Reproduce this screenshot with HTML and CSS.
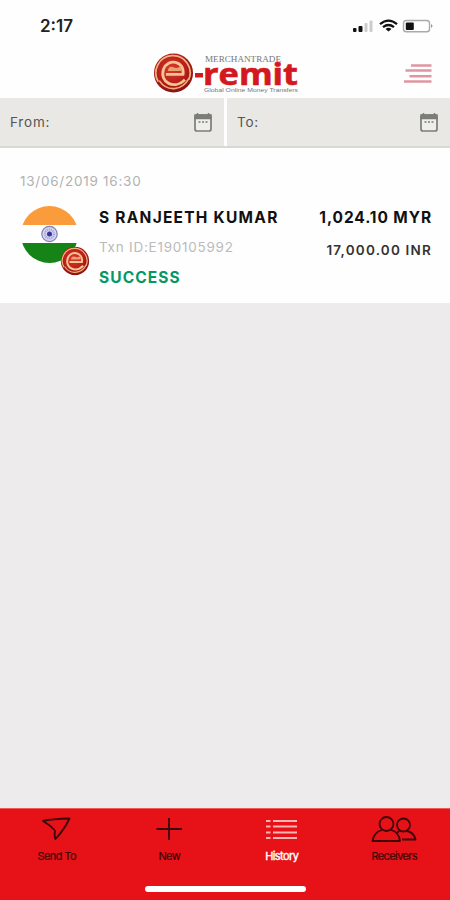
FILE: index.html
```html
<!DOCTYPE html>
<html lang="en">
<head>
    <meta charset="UTF-8">
    <meta name="viewport" content="width=device-width, initial-scale=1.0">
    <title>e-remit History</title>
    <link rel="stylesheet" href="styles.css">
</head>
<body>

    <div class="app">
        <div class="status-bar">
            <span class="time">2:17</span>
            <svg class="status-icons" width="82" height="16" viewBox="0 0 82 16">
                <rect x="1" y="10" width="3.5" height="4" rx="1" fill="#111"/>
                <rect x="6.5" y="8" width="4" height="6" rx="1" fill="#111"/>
                <rect x="12.5" y="5" width="3" height="9" rx="1" fill="#ccc"/>
                <rect x="17.5" y="2.5" width="3" height="11.5" rx="1" fill="#ccc"/>
                <g fill="none" stroke="#111" stroke-width="2.3">
                    <path d="M28 6.2Q36.5-1 45 6.2"/>
                    <path d="M31 9.1Q36.5 4.8 42 9.1"/>
                </g>
                <path d="M33.5 10.9Q36.5 8.8 39.5 10.9L36.5 13.5Z" fill="#111"/>
                <rect x="51.5" y="2.5" width="26" height="11.3" rx="2.8" fill="#fff" stroke="#aaa" stroke-width="1.4"/>
                <rect x="53.8" y="4.5" width="8" height="7.5" rx="1" fill="#111"/>
                <path d="M79 6Q82 8 79 10Z" fill="#999"/>
            </svg>
        </div>

        <div class="header">
            <svg class="logo" width="148" height="44" viewBox="0 0 148 44">
                <defs>
                    <radialGradient id="coin-red" cx="45%" cy="40%" r="60%">
                        <stop offset="0" stop-color="#d93c2e"/>
                        <stop offset="0.6" stop-color="#b81e1c"/>
                        <stop offset="1" stop-color="#8a1214"/>
                    </radialGradient>
                    <symbol id="coin" viewBox="0 0 42 42">
                        <circle cx="21" cy="21" r="20.5" fill="url(#coin-red)"/>
                        <path d="M5 30A18 18 0 1 1 37 28" fill="none" stroke="#efb27b" stroke-width="1.8"/>
                        <path d="M13 22.5H31C33 8 15 5 10.500 17C6 31 22 39 33 28" fill="none" stroke="#f5c491" stroke-width="3"/>
                        <path d="M15 19Q16 13 21 15Q25 17 29 13L29 19Z" fill="#e9a16f"/>
                        <path d="M6 29C14 41 30 40 37 27" fill="none" stroke="#efae75" stroke-width="1.8"/>
                    </symbol>
                </defs>
                <use href="#coin" x="1" y="2" width="41" height="40"/>
                <text class="logo-top" x="53" y="10.5" textLength="76" lengthAdjust="spacingAndGlyphs">MERCHANTRADE</text>
                <rect x="43" y="22" width="8" height="4.5" fill="#d41820"/>
                <text class="logo-name" x="51" y="33.5" textLength="95" lengthAdjust="spacingAndGlyphs">remit</text>
                <text class="logo-tag" x="52" y="41" textLength="94" lengthAdjust="spacingAndGlyphs">Global Online Money Transfers</text>
            </svg>
            <svg class="menu" width="30" height="22" viewBox="0 0 30 22" stroke="#df96a3" stroke-width="2.4">
                <path d="M8 2.5H28.500M2.500 7.500H28.500M6.500 13.300H28.500M1 18.500H28.500"/>
            </svg>
        </div>

        <div class="filters">
            <div class="filter">
                <span>From:</span>
                <svg width="20" height="22" viewBox="0 0 20 22">
                    <rect x="2" y="4" width="16" height="16" rx="2" fill="#eeeeeb" stroke="#7c7c78" stroke-width="1.7"/>
                    <path d="M2 4H18V7.500H2ZM4.500 2V5M15.500 2V5" fill="#7c7c78" stroke="#7c7c78" stroke-width="1.5"/>
                    <path d="M5.500 11H14.500" stroke="#7c7c78" stroke-width="1.6" stroke-dasharray="2 1.5"/>
                </svg>
            </div>
            <div class="filter">
                <span>To:</span>
                <svg width="20" height="22" viewBox="0 0 20 22">
                    <rect x="2" y="4" width="16" height="16" rx="2" fill="#eeeeeb" stroke="#7c7c78" stroke-width="1.7"/>
                    <path d="M2 4H18V7.500H2ZM4.500 2V5M15.500 2V5" fill="#7c7c78" stroke="#7c7c78" stroke-width="1.5"/>
                    <path d="M5.500 11H14.500" stroke="#7c7c78" stroke-width="1.6" stroke-dasharray="2 1.5"/>
                </svg>
            </div>
        </div>

        <div class="transaction">
            <div class="date">13/06/2019 16:30</div>
            <div class="details">
                <svg class="flag" width="70" height="70" viewBox="0 0 70 70">
                    <clipPath id="flag-clip"><circle cx="29.5" cy="28.5" r="28.5"/></clipPath>
                    <g clip-path="url(#flag-clip)">
                        <path d="M0 0H60V19H0Z" fill="#fb9c3c"/>
                        <path d="M0 19H60V37H0Z" fill="#fff"/>
                        <path d="M0 37H60V58H0Z" fill="#158316"/>
                    </g>
                    <circle cx="29.5" cy="28" r="7.7" fill="#d5d5f0" stroke="#8080bd" stroke-width="1.2"/>
                    <circle cx="29.5" cy="28" r="4.5" fill="none" stroke="#9d9dd2" stroke-width="2" stroke-dasharray="1 1"/>
                    <circle cx="29.5" cy="28" r="2.5" fill="#35359a"/>
                    <use href="#coin" x="40" y="40.5" width="30" height="29"/>
                </svg>
                <div class="person">
                    <div class="name">S RANJEETH KUMAR</div>
                    <div class="txn">Txn ID:E190105992</div>
                    <div class="status">SUCCESS</div>
                </div>
                <div class="amounts">
                    <div class="sent">1,024.10 MYR</div>
                    <div class="received">17,000.00 INR</div>
                </div>
            </div>
        </div>

        <div class="nav">
            <div class="nav-item">
                <svg width="46" height="28" viewBox="0 0 46 28">
                    <path d="M10 7Q19 5 36.500 4.500Q31 16 22.500 25Q21 22 22 16.500Q17 11 10 7Z"/>
                </svg>
                <span>Send To</span>
            </div>
            <div class="nav-item">
                <svg width="46" height="28" viewBox="0 0 46 28">
                    <path d="M23 4V26M10.500 15H36"/>
                </svg>
                <span>New</span>
            </div>
            <div class="nav-item active">
                <svg width="46" height="28" viewBox="0 0 46 28">
                    <path d="M8 7H12.500M15 7H39M8 12.500H12.500M15 12.500H39M8 18.500H12.500M15 18.500H39M8 24H12.500M15 24H39"/>
                </svg>
                <span>History</span>
            </div>
            <div class="nav-item">
                <svg width="46" height="28" viewBox="0 0 46 28">
                    <circle cx="15.500" cy="10" r="7"/>
                    <path d="M11 16Q3 18 1.500 27H29Q28 18 20 16"/>
                    <circle cx="32.500" cy="11" r="6.500"/>
                    <path d="M28.500 17L26 18.500M36 17Q43 18.500 44.500 25.500H31"/>
                </svg>
                <span>Receivers</span>
            </div>
            <div class="home-bar"></div>
        </div>
    </div>

</body>
</html>
```
FILE: styles.css
```css
body {
    margin: 0;
    padding: 0;
    background-color: #edebec;
    font-family: Inter, Arial, sans-serif;
}

.app {
    width: 450px;
    height: 900px;
    display: flex;
    flex-direction: column;
    overflow: hidden;
}

.status-bar {
    height: 50px;
    box-sizing: border-box;
    padding: 18px 16px 0 40px;
    display: flex;
    justify-content: space-between;
    align-items: flex-start;
    background-color: #fefefe;
}

.time {
    font-size: 17px;
    line-height: 17px;
    font-weight: 600;
    color: #222;
}

.header {
    height: 48px;
    box-sizing: border-box;
    padding: 1px 17px 0 152px;
    display: flex;
    justify-content: space-between;
    align-items: flex-start;
    background-color: #fefefe;
}

.logo {
    overflow: visible;
}

.menu {
    margin-top: 12px;
}

.logo-top {
    font-family: "Liberation Serif", serif;
    font-size: 8.5px;
    fill: #777;
}

.logo-name {
    font-family: "Open Sans", sans-serif;
    font-size: 30px;
    font-weight: 700;
    fill: #d41820;
    stroke: #d41820;
    stroke-width: 0.6px;
}

.logo-tag {
    font-family: "Liberation Sans", sans-serif;
    font-size: 6px;
    fill: #777;
}

/* Date range filters */
.filters {
    height: 50px;
    box-sizing: border-box;
    display: grid;
    grid-template-columns: 224px 223px;
    gap: 3px;
    border-bottom: 2px solid #d8d8d6;
    background-color: #fefefe;
}

.filter {
    display: flex;
    justify-content: space-between;
    align-items: center;
    padding: 0 11px 0 10px;
    background-color: #e9e8e5;
    font-size: 13.5px;
    letter-spacing: 0.8px;
    color: #555;
}

/* Transaction card */
.transaction {
    height: 155px;
    box-sizing: border-box;
    padding: 25px 18px 0 20px;
    background-color: #fefefe;
}

.date {
    font-size: 13.5px;
    line-height: 17px;
    letter-spacing: 0.75px;
    color: #b2b2b2;
}

.details {
    display: flex;
    margin-top: 16px;
}

.person {
    margin-left: 9px;
    white-space: nowrap;
}

.name {
    font-size: 15.5px;
    line-height: 20px;
    font-weight: 700;
    letter-spacing: 1.25px;
    color: #111;
    padding-top: 2px;
}

.txn {
    font-size: 13.5px;
    line-height: 20px;
    letter-spacing: 0.75px;
    color: #bbb;
    margin-top: 9px;
}

.status {
    font-size: 15.5px;
    line-height: 20px;
    font-weight: 700;
    letter-spacing: 1.1px;
    color: #079765;
    margin-top: 11px;
}

.amounts {
    margin-left: auto;
    text-align: right;
    white-space: nowrap;
}

.sent {
    font-size: 15.5px;
    line-height: 20px;
    font-weight: 700;
    letter-spacing: 0.9px;
    color: #111;
    padding-top: 2px;
}

.received {
    font-size: 13.5px;
    line-height: 20px;
    font-weight: 600;
    letter-spacing: 1.2px;
    color: #333;
    margin-top: 12px;
}

/* Bottom navigation */
.nav {
    height: 92px;
    box-sizing: border-box;
    margin-top: auto;
    padding-top: 5px;
    display: grid;
    grid-template-columns: repeat(4, 112.5px);
    align-content: start;
    background-color: #e61217;
    border-top: 1px solid #f05a5c;
}

.nav-item {
    display: flex;
    flex-direction: column;
    align-items: center;
    font-size: 11px;
    line-height: 14px;
    letter-spacing: -0.6px;
    color: #3c0709;
}

.nav-item svg {
    fill: none;
    stroke: #3c0709;
    stroke-width: 1.8;
    stroke-linejoin: round;
}

.nav-item span {
    margin-top: 7px;
    margin-left: 1px;
    -webkit-text-stroke: 0.2px;
}

.nav-item.active {
    color: #fff;
}

.nav-item.active svg {
    stroke: #ffb4b4;
}

.nav-item.active span {
    -webkit-text-stroke: 0.4px;
}

.home-bar {
    grid-column: 1 / -1;
    justify-self: center;
    width: 161px;
    height: 6px;
    margin-top: 23px;
    border-radius: 3px;
    background-color: #fff;
}
```
